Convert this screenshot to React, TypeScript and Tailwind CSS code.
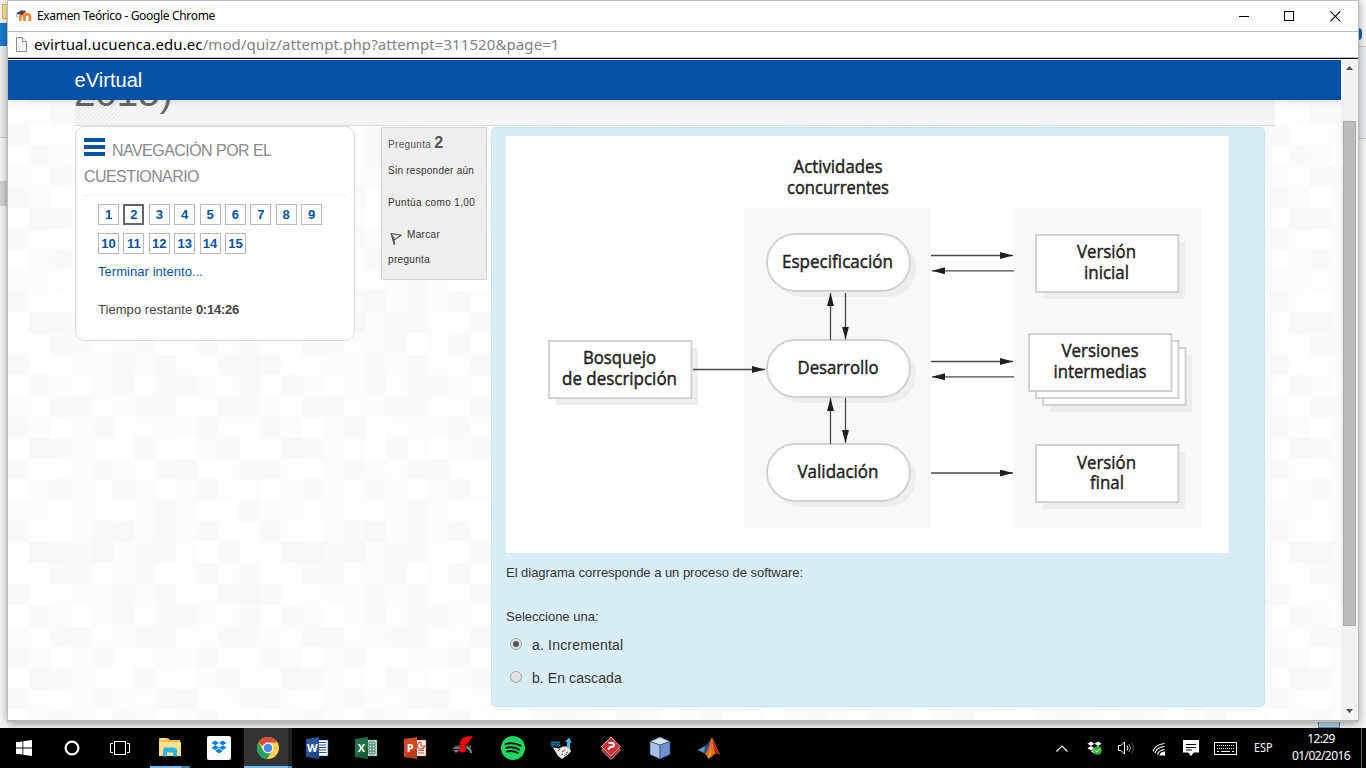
import React from "react";

const sans = "font-['Liberation_Sans',Arial,sans-serif]";
const ui = "font-['Noto_Sans','Open_Sans',sans-serif]";

const SHADES = ["#ffffff", "#fdfdfd", "#fcfcfc", "#fafafa", "#f8f8f8"];
const ROW_Y = [0, 21, 42, 63, 84, 105, 126, 147, 167, 188, 209, 230];
const MOSAIC = [
  "144342331031",
  "113312301313",
  "301223231134",
  "032023133213",
  "213312331133",
  "320230122311",
  "143210310231",
  "310232133013",
  "023213202311",
  "221211232003",
  "310234232310",
];

function Mosaic() {
  return (
    <svg className="absolute inset-0" width="1333" height="660" shapeRendering="crispEdges">
      <defs>
        <pattern id="mosaic" width="252" height="230" y="22" patternUnits="userSpaceOnUse">
          {MOSAIC.map((row, r) =>
            row.split("").map((v, c) => (
              <rect key={`${r}-${c}`} x={c * 21} y={ROW_Y[r]} width={21} height={ROW_Y[r + 1] - ROW_Y[r]} fill={SHADES[Number(v)]} />
            )),
          )}
        </pattern>
      </defs>
      <rect width="1333" height="660" fill="url(#mosaic)" />
    </svg>
  );
}

function MoodleIcon() {
  return (
    <svg width="16" height="12" viewBox="0 0 16 12">
      <path d="M4.2 11V6.8a2.2 2.2 0 0 1 4.3 0V11M8.5 11V6.8a2.7 2.7 0 0 1 5.4 0V11" fill="none" stroke="#f08a33" strokeWidth="2.8" />
      <path d="M0 3.2 5.5.3l5.2.6-4 3.6-3 .2z" fill="#4a4440" />
      <path d="M1 3.5v4" stroke="#8a8a8a" strokeWidth=".9" />
    </svg>
  );
}

function TitleBar() {
  return (
    <div className="flex h-[31px] items-center bg-white pb-[2px] pl-[8px]">
      <MoodleIcon />
      <span className={`${ui} ml-[5px] text-[12px] tracking-[-0.33px] text-black`}>Examen Teórico - Google Chrome</span>
      <svg className="ml-auto mr-[16px]" width="103" height="12" viewBox="0 0 103 12">
        <path d="M0 6.5h10" stroke="#000" />
        <rect x="45.5" y="1.5" width="9" height="9" fill="none" stroke="#000" />
        <path d="M91.3 1.3l10 10M101.3 1.3l-10 10" stroke="#000" strokeWidth="1.1" />
      </svg>
    </div>
  );
}

function AddressBar() {
  return (
    <div className="flex h-[26px] items-center border-t border-[#bdbdbd] bg-white pl-[8px]">
      <svg width="11" height="15" viewBox="0 0 11 15">
        <path d="M.5.5h6l4 4v10H.5z" fill="#f6f6f6" stroke="#8c8c8c" />
        <path d="M6.5.5v4h4" fill="#fff" stroke="#8c8c8c" />
      </svg>
      <span className={`${ui} ml-[7px] text-[15px] tracking-[0.09px] text-[#828282]`}>
        <span className="text-black">evirtual.ucuenca.edu.ec</span>/mod/quiz/attempt.php?attempt=311520&amp;page=1
      </span>
    </div>
  );
}

function Scrollbar() {
  return (
    <div className="flex h-full w-[17px] flex-col items-center bg-[#f1f1f1]">
      <svg className="mt-[6px]" width="7" height="4" viewBox="0 0 7 4"><path d="M0 4 3.5 0 7 4z" fill="#505050" /></svg>
      <div className="mt-[51px] h-[505px] w-[13px] border border-[#a8a8a8] bg-[#bcbcbc]" />
      <svg className="mb-[7px] mt-auto" width="7" height="4" viewBox="0 0 7 4"><path d="M0 0h7L3.5 4z" fill="#505050" /></svg>
    </div>
  );
}

function QuizNav() {
  return (
    <aside className={`${sans} h-[215px] w-[280px] rounded-[10px] border border-[#ddd] bg-white px-[8px]`}>
      <h2 className="flex h-[69px] flex-wrap content-start border-b border-[#eee] pt-[11px] text-[16px] leading-[26px] text-[#8a8a8a]">
        <svg className="mr-[7px]" width="21" height="19" viewBox="0 0 21 19">
          <path d="M0 2h21M0 9h21M0 16h21" stroke="#0452a5" strokeWidth="3.8" />
        </svg>
        <span className="tracking-[-0.54px]">NAVEGACIÓN POR EL</span>
        <span className="w-full tracking-[-0.57px]">CUESTIONARIO</span>
      </h2>
      <div className="ml-[14px] mt-[8px] flex w-[240px] flex-wrap gap-x-[4.4px] gap-y-[8px]">
        {Array.from({ length: 15 }, (_, i) => i + 1).map((n) => (
          <span
            key={n}
            className={
              n === 2
                ? "flex h-[21px] w-[21px] items-center justify-center border-2 border-[#666] pb-px text-[13px] font-bold leading-none text-[#0452a5]"
                : "flex h-[21px] w-[21px] items-center justify-center border border-[#bababa] pb-px text-[13px] font-bold leading-none text-[#0452a5]"
            }
          >
            {n}
          </span>
        ))}
      </div>
      <p className="ml-[14px] mt-[8px] text-[13px] leading-[20px] tracking-[0.05px] text-[#0452a5]">Terminar intento...</p>
      <p className="ml-[14px] mt-[18px] text-[13px] leading-[20px] tracking-[0.05px] text-[#444]">
        Tiempo restante <b className="tracking-[-0.25px]">0:14:26</b>
      </p>
    </aside>
  );
}

function QuestionInfo() {
  return (
    <div className={`${sans} h-[153px] w-[106px] rounded-[2px] border border-[#d6d6d6] bg-[#eee] pl-[6px] text-[10px] tracking-[0.32px] text-[#333]`}>
      <p className="mt-[5px] leading-[20px] text-[#555]">Pregunta <b className="text-[16px] tracking-normal">2</b></p>
      <p className="mt-[6px] leading-[20px] tracking-[0.26px]">Sin responder aún</p>
      <p className="mt-[12px] leading-[20px] tracking-[0.38px]">Puntúa como 1,00</p>
      <p className="mt-[9px] flex flex-wrap leading-[25px]">
        <svg className="ml-[2px] mr-[5px] mt-[10px]" width="12" height="13" viewBox="0 0 12 13">
          <path d="M1 1l3.5 11.5M1.5 1.5 11 3.2 4.2 8" fill="none" stroke="#555" strokeWidth="1.2" />
          <path d="M.5.8l3.8 4.8.9 6.9-1.4.1z" fill="#555" />
        </svg>
        <span>Marcar</span>
        <span className="w-full">pregunta</span>
      </p>
    </div>
  );
}

type LabelProps = { x: number; y: number; w: number; children: string };
function Label({ x, y, w, children }: LabelProps) {
  return (
    <text x={x - w / 2} y={y} textLength={w} lengthAdjust="spacingAndGlyphs" fontFamily="'Open Sans','Noto Sans',sans-serif" fontSize="17.5" fill="#231f20" stroke="#231f20" strokeWidth="0.45">
      {children}
    </text>
  );
}

function Pill({ y }: { y: number }) {
  return (
    <>
      <rect x="267" y={y + 6} width="143" height="57" rx="28.5" fill="#eee" />
      <rect x="261" y={y} width="143" height="57" rx="28.5" fill="#fff" stroke="#d2d2d2" strokeWidth="2" />
    </>
  );
}

function Sheet({ x, y, shadow = true }: { x: number; y: number; shadow?: boolean }) {
  return (
    <>
      {shadow && <rect x={x + 7} y={y + 7} width="142" height="57" fill="#eee" />}
      <rect x={x} y={y} width="142.5" height="57" fill="#fff" stroke="#d2d2d2" strokeWidth="2" />
    </>
  );
}

function Arrow({ x1, y1, x2, y2 }: { x1: number; y1: number; x2: number; y2: number }) {
  return <line x1={x1} y1={y1} x2={x2} y2={y2} stroke="#4a4748" strokeWidth="1.3" markerEnd="url(#head)" />;
}

function Diagram() {
  return (
    <svg className="block" width="723" height="417" viewBox="0 0 723 417">
      <defs>
        <marker id="head" markerUnits="userSpaceOnUse" markerWidth="14" markerHeight="8" refX="13" refY="3.5" orient="auto">
          <path d="M0 0 13 3.5 0 7z" fill="#231f20" />
        </marker>
      </defs>
      <rect width="723" height="417" fill="#fff" />
      <rect x="238" y="72" width="187" height="320" fill="#f8f8f8" />
      <rect x="508" y="72" width="187" height="320" fill="#f8f8f8" />
      <Label x={332} y={37} w={89}>Actividades</Label>
      <Label x={332} y={58} w={102}>concurrentes</Label>
      <Pill y={98} />
      <Pill y={204} />
      <Pill y={308} />
      <Label x={331.5} y={132} w={111}>Especificación</Label>
      <Label x={332} y={238} w={81}>Desarrollo</Label>
      <Label x={332} y={342} w={81}>Validación</Label>
      <Sheet x={43} y={205} />
      <Label x={113.5} y={228} w={73}>Bosquejo</Label>
      <Label x={113.5} y={249} w={115}>de descripción</Label>
      <Sheet x={530} y={99} />
      <Label x={600.5} y={121.500} w={59}>Versión</Label>
      <Label x={600.5} y={142.500} w={45}>inicial</Label>
      <Sheet x={537} y={212} />
      <Sheet x={530} y={205} shadow={false} />
      <Sheet x={523} y={198} shadow={false} />
      <Label x={594} y={221} w={77}>Versiones</Label>
      <Label x={594} y={241.500} w={93}>intermedias</Label>
      <Sheet x={530} y={309} />
      <Label x={600.5} y={332.500} w={59}>Versión</Label>
      <Label x={601} y={353} w={34}>final</Label>
      <Arrow x1={187} y1={233.5} x2={259} y2={233.5} />
      <Arrow x1={324.5} y1={204} x2={324.5} y2={157} />
      <Arrow x1={339.5} y1={157} x2={339.5} y2={203.500} />
      <Arrow x1={324.5} y1={308} x2={324.5} y2={262} />
      <Arrow x1={339.5} y1={262} x2={339.5} y2={307} />
      <Arrow x1={425} y1={119.5} x2={507} y2={119.5} />
      <Arrow x1={508} y1={134.8} x2={426} y2={134.8} />
      <Arrow x1={425} y1={225.5} x2={507} y2={225.5} />
      <Arrow x1={508} y1={240.8} x2={426} y2={240.8} />
      <Arrow x1={425} y1={337} x2={507} y2={337} />
    </svg>
  );
}

function Radio({ checked = false }: { checked?: boolean }) {
  return (
    <span className="flex h-[12px] w-[12px] items-center justify-center rounded-full border border-[#a5a5a5] bg-linear-to-b from-[#e8e8e8] to-[#dedede]">
      {checked && <span className="h-[6px] w-[6px] rounded-full bg-[#555]" />}
    </span>
  );
}

function Question() {
  return (
    <main className={`${sans} h-[580px] w-[774px] rounded-[5px] border border-[#bce8f1] bg-[#d9edf7] pl-[14px] pt-[8px] text-[#333]`}>
      <Diagram />
      <p className="mt-[10px] text-[13px] leading-[20px] tracking-[-0.03px]">El diagrama corresponde a un proceso de software:</p>
      <p className="mt-[24px] text-[13px] leading-[20px] tracking-[0px]">Seleccione una:</p>
      <div className="mt-[7px] flex h-[20px] items-center gap-[10px] pl-[4px] text-[14px] tracking-[0.18px]">
        <Radio checked />
        <span className="pt-[2px]">a. Incremental</span>
      </div>
      <div className="mt-[13px] flex h-[20px] items-center gap-[10px] pl-[4px] text-[14px] tracking-[0.08px]">
        <Radio />
        <span className="pt-[2px]">b. En cascada</span>
      </div>
    </main>
  );
}

function Page() {
  return (
    <div className="flex h-[660px]">
      <div className="relative w-[1333px] overflow-hidden">
        <Mosaic />
        <div className="relative flex h-full flex-col">
          <nav className={`${sans} z-10 h-[40px] shrink-0 bg-[#0452a5] pl-[66.500px] text-[20px] leading-[40px] tracking-[0.05px] text-white shadow-[0_1px_8px_rgba(0,0,0,0.13)]`}>eVirtual</nav>
          <header className="ml-[67px] flex h-[26px] w-[1200px] shrink-0 items-end overflow-hidden border-b border-[#ddd] bg-[repeating-linear-gradient(135deg,#f8f8f8_0_2.1px,#ebebeb_2.1px_2.83px)]">
            <h1 className={`${sans} ml-[-1px] h-[54px] text-[38.5px] leading-[44px] text-[#666]`}>2015)</h1>
          </header>
          <div className="ml-[67px] flex items-start">
            <QuizNav />
            <div className="ml-[26px] mt-px"><QuestionInfo /></div>
            <div className="ml-[4px] mt-px"><Question /></div>
          </div>
        </div>
      </div>
      <Scrollbar />
    </div>
  );
}

function BrowserWindow() {
  return (
    <div className="z-10 h-[721px] w-[1350px] shrink-0 border-b border-[#b5b5b5] shadow-[0_2px_9px_rgba(0,0,0,0.45)] outline-1 -outline-offset-0 outline-[#bdbdbd]">
      <div className="h-px bg-[#bdbdbd]" />
      <div className="mt-[-1px] border-t border-[#bdbdbd]">
        <TitleBar />
      </div>
      <div className="mt-[-1px]"><AddressBar /></div>
      <div className="h-[3px] border-t border-[#bfc6ca] bg-white"><div className="h-px bg-black" /></div>
      <Page />
    </div>
  );
}

function Office({ letter, color, dark, children }: { letter: string; color: string; dark: string; children: React.ReactNode }) {
  return (
    <svg width="24" height="24" viewBox="0 0 24 24">
      <rect x="12" y="4" width="11" height="16" fill="#fff" stroke={color} strokeWidth=".6" />
      {children}
      <path d="M1 3 14 1v22L1 21z" fill={color} />
      <path d="M1 21 14 23V12z" fill={dark} opacity=".35" />
      <text x="7.3" y="16" textAnchor="middle" fontFamily="'Open Sans',sans-serif" fontWeight="700" fontSize="11" fill="#fff">{letter}</text>
    </svg>
  );
}

function DropboxGlyph({ size, color }: { size: number; color: string }) {
  return (
    <svg width={size} height={size} viewBox="0 0 24 24" fill={color}>
      <path d="M7 2 12 5.2 7 8.4 2 5.2zM17 2l5 3.2-5 3.2-5-3.2zM2 11.6l5-3.2 5 3.2-5 3.2zM17 8.4l5 3.2-5 3.2-5-3.2zM7 16l5-3.2L17 16l-5 3.4z" />
    </svg>
  );
}

function ChromeIcon() {
  return (
    <svg width="24" height="24" viewBox="0 0 24 24">
      <circle cx="12" cy="12" r="11" fill="#fdd04e" />
      <path d="M2.5 6.5A11 11 0 0 1 21.5 6.5H12a5.5 5.5 0 0 0-5.2 3.8z" fill="#dd4b3e" />
      <path d="M2.5 6.5A11 11 0 0 0 11 23l5-8.2a5.5 5.5 0 0 1-8.8 0z" fill="#1da362" />
      <circle cx="12" cy="12" r="5.4" fill="#fff" />
      <circle cx="12" cy="12" r="4.3" fill="#4c8bf5" />
    </svg>
  );
}

function Cell({ children }: { children: React.ReactNode }) {
  return <div className="flex h-full w-[49px] items-center pl-[13px]">{children}</div>;
}

function Taskbar() {
  return (
    <footer className="flex h-[40px] items-center bg-black">
      <div className="flex w-[48px] justify-center">
        <svg width="16" height="16" viewBox="0 0 16 16" fill="#fff"><path d="M0 2.3 6.5 1.4v6.2H0zM7.3 1.2 16 0v7.6H7.3zM0 8.4h6.5v6.2L0 13.7zM7.3 8.4H16V16l-8.7-1.2z" /></svg>
      </div>
      <div className="flex w-[48px] justify-center">
        <svg width="16" height="16" viewBox="0 0 16 16"><circle cx="8" cy="8" r="6.4" fill="none" stroke="#fff" strokeWidth="2.200" /></svg>
      </div>
      <div className="flex w-[48px] justify-center">
        <svg width="20" height="14" viewBox="0 0 20 14" fill="none" stroke="#fff"><rect x="4.5" y=".5" width="11" height="13" /><path d="M3 2.5H.5v9H3M17 2.5h2.5v9H17" /></svg>
      </div>
      <div className="ml-px flex h-full w-[49px] flex-col pl-[5px]">
        <div className="flex flex-1 items-center pl-[8px]">
          <svg width="24" height="24" viewBox="0 0 24 24">
            <path d="M1 3h9l2 2h10v16H1z" fill="#f0bd49" />
            <path d="M1 7h22v14H1z" fill="#fde08a" />
            <path d="M2.5 4.2h5" stroke="#fff6d0" strokeWidth="1.5" />
            <path d="M5 21.500v-7l2-2h10l2 2v7h-4v-4H9v4z" fill="#28b5e8" />
          </svg>
        </div>
        <div className="flex h-[2px] w-[40px]"><i className="w-[31px] bg-[#76b9ed]" /><i className="w-[9px] bg-[#4f7fa6]" /></div>
      </div>
      <Cell><div className="flex h-[24px] w-[24px] items-center justify-center rounded-[2px] bg-white"><DropboxGlyph size={18} color="#007ee5" /></div></Cell>
      <div className="ml-px flex h-full w-[48px] flex-col bg-[#333]">
        <div className="flex flex-1 border-r-[4px] border-[#202020]"><div className="pl-[12px] pt-[8px]"><ChromeIcon /></div></div>
        <div className="flex h-[2px]"><i className="w-[44px] bg-[#76b9ed]" /><i className="w-[4px] bg-[#4f8fc6]" /></div>
      </div>
      <Cell><Office letter="W" color="#2b579a" dark="#102f60"><path d="M14 6.500h7.500M14 9h7.500M14 11.500h7.500M14 14h7.500M14 16.500h7.500" stroke="#2b579a" /></Office></Cell>
      <Cell><Office letter="X" color="#1e7145" dark="#0a3a20"><path d="M15 6h6v12h-6zM18 6v12M15 9h6M15 12h6M15 15h6" fill="none" stroke="#1e7145" /></Office></Cell>
      <Cell><Office letter="P" color="#d24726" dark="#8a2508"><path d="M15 14.500h6M15 17h6M18 6v4h3.500A3.500 3.500 0 1 1 18 6" fill="none" stroke="#d24726" strokeWidth="1.200" /></Office></Cell>
      <Cell>
        <svg width="24" height="24" viewBox="0 0 24 24">
          <path d="M1 12q3-3 7-1v2H1zm0 2h7l-4 3zM14 9l5 1v2l-5-1z" fill="#777" />
          <path d="M7.500 8.500Q9 1 15 0.500L21 0 17 6 12 10z" fill="#f00" />
          <path d="M4 9.500l4-1 6 1 5 1-3 2-8-1z" fill="#444" />
          <circle cx="10.500" cy="13" r="3.400" fill="#f00" />
          <path d="M14.500 12q4 0 4.500 5" fill="none" stroke="#888" strokeWidth="2.200" />
        </svg>
      </Cell>
      <Cell>
        <svg width="24" height="24" viewBox="0 0 24 24">
          <circle cx="12" cy="12" r="12" fill="#1ed760" />
          <path d="M4.500 8.200c5-1.500 10.600-1 15 1.500M5.300 12c4.200-1.200 9-.7 12.800 1.500M6 15.600c3.600-1 7.500-.6 10.700 1.200" fill="none" stroke="#191414" strokeWidth="2" strokeLinecap="round" />
        </svg>
      </Cell>
      <Cell>
        <svg width="24" height="24" viewBox="0 0 24 24">
          <path d="M3 11.500l6 1 4-2 6 0 2 5-4 4-5 3.500-4-3z" fill="#e8e8df" />
          <path d="M8 15l2-2M12 16l3-2M11 19l2-1M16 17l2-1M14 20l3-2" stroke="#555" />
          <path d="M1 5.500h9v5H1z" fill="#087cad" />
          <text x="1.500" y="9.900" fontFamily="'Liberation Sans',sans-serif" fontWeight="700" fontSize="4.300" fill="#001f35">CAT</text>
          <path d="M17 12V6h-2l4-4.500 3 5.500-2-.5v6z" fill="#4db7ed" />
        </svg>
      </Cell>
      <Cell>
        <svg width="24" height="24" viewBox="0 0 24 24">
          <path d="M12 5l9.500 9L12 23.500 2.500 14z" fill="#b5262c" stroke="#ddd" strokeWidth=".7" />
          <path d="M12 1l9.500 9.500L12 20 2.500 10.500z" fill="#cf3035" stroke="#ddd" strokeWidth=".7" />
          <path d="M9.500 7h3.500a1.900 1.900 0 0 1 0 3.800l-1.500.2-2.500 2.500" fill="none" stroke="#fff" strokeWidth="1.900" />
        </svg>
      </Cell>
      <Cell>
        <svg width="24" height="24" viewBox="0 0 24 24" stroke="#344a88" strokeWidth=".7">
          <path d="M2 5.500 12 1l10 4.500L12 9z" fill="#d5e6df" />
          <path d="M2 5.500 12 9v14L2 18.500z" fill="#a6bfe4" />
          <path d="M22 5.500 12 9v14l10-4.500z" fill="#6d91cf" />
        </svg>
      </Cell>
      <Cell>
        <svg width="24" height="24" viewBox="0 0 24 24">
          <path d="M.5 14 8 10l4 4-5 3z" fill="#4b9dc8" />
          <path d="M8 10c3-1 4-6 7-8l-3 13-5 2z" fill="#294e83" />
          <path d="M15 1.500c3 3 4.500 12 8.500 17-4-2-6-1-8.500 2-1.500 1.500-3.500 2.500-4 2.500-.5-3-2-4-3.500-5.500C13 14 12 5 15 1.500z" fill="#e56b25" />
          <path d="M15 1.500c2.500 4 4 13 8.500 17-2.500-1-4-1-5 0C17 13 16 5 15 1.500z" fill="#9b291f" />
          <path d="M14 9c0 6-2 9-3 13l3-3z" fill="#fbb33e" />
        </svg>
      </Cell>
      <div className="ml-auto flex items-center text-white">
        <div className="flex w-[32px] justify-center"><svg width="12" height="7" viewBox="0 0 12 7"><path d="M.5 6.500 6 1l5.500 5.500" fill="none" stroke="#fff" strokeWidth="1.200" /></svg></div>
        <div className="relative flex w-[32px] justify-center">
          <DropboxGlyph size={17} color="#fff" />
          <svg className="absolute left-[15px] top-[6px]" width="9" height="9" viewBox="0 0 9 9"><circle cx="4.500" cy="4.500" r="4.300" fill="#2db52d" /><path d="M2.300 4.600 4 6.200l2.800-3.400" fill="none" stroke="#fff" /></svg>
        </div>
        <div className="flex w-[32px] justify-center">
          <svg width="17" height="14" viewBox="0 0 17 14" fill="none" stroke="#fff"><path d="M.5 4.500h2.500L6.500 1v12L3 9.500H.5z" /><path d="M9 4.500q1.800 2.500 0 5" /><path d="M11 3q3 4 0 8" stroke="#999" /><path d="M13.300 1.500q4 5.500 0 11" stroke="#555" /></svg>
        </div>
        <div className="flex w-[33px] justify-center pt-[2px]">
          <svg width="14" height="14" viewBox="0 0 14 14" fill="none" stroke="#fff" strokeWidth="1.200"><path d="M1 9.500Q3 2.500 12.500 1.500M3 11Q4.500 5.500 12.500 4.500M5.500 12.500Q6.500 8.500 12.500 7.500" /><path d="M8.300 13q.5-2.300 4.200-2.800V13z" fill="#fff" /></svg>
        </div>
        <div className="flex w-[31px] justify-center">
          <svg width="16" height="16" viewBox="0 0 16 16"><path d="M0 0h16v12.500h-5L8 16l-3-3.500H0z" fill="#fff" /><path d="M3 4.500h10M3 7.500h10M3 10h6" stroke="#000" /></svg>
        </div>
        <div className="flex w-[38px] justify-center">
          <svg width="23" height="13" viewBox="0 0 23 13" fill="none" stroke="#fff"><rect x=".5" y=".5" width="22" height="12" /><path d="M3 3.500h18M3 6.500h18" strokeDasharray="1 1" /><path d="M3 9.500h2M7 9.500h9M18 9.500h2" /></svg>
        </div>
        <span className={`${ui} flex w-[39px] justify-center`}><span className="inline-block origin-center scale-x-[0.9] text-[12px]">ESP</span></span>
        <span className={`${ui} flex w-[76px] flex-col items-center pb-[2px] text-[12px] leading-[17px]`}>
          <span className="tracking-[-0.65px]">12:29</span>
          <span className="tracking-[-0.6px]">01/02/2016</span>
        </span>
        <i className="ml-[2px] mr-[4px] h-[40px] w-px bg-[#666]" />
      </div>
    </footer>
  );
}

export default function App() {
  return (
    <div className="h-[768px] w-[1366px] overflow-hidden bg-[#f4f4f4]">
      <div className="relative flex h-[728px] overflow-hidden">
        <div className="flex w-[8px] shrink-0 flex-col bg-[#f6f6f6]">
          <i className="ml-[2px] mt-[4px] h-[15px] border border-[#e0bd49] bg-[#fde79f]" />
          <i className="mt-[4px] h-[23px] bg-[#1979ca]" />
          <i className="h-[92px] border-b border-[#ccc] bg-[#eceeef]" />
          <i className="mt-[43px] h-[25px] bg-[#d4d4d4]" />
        </div>
        <BrowserWindow />
        <div className="flex flex-1 flex-col bg-[#f6f6f6]">
          <i className="mt-[28px] h-[12px] w-[4px] rounded-r-full bg-[#0a64ad]" />
          <i className="mt-[6px] h-[93px] border-y border-[#c8c8c8] bg-[#e9eeee]" />
        </div>
        <div className="absolute left-[1318px] top-[712px] h-[16px] w-[22px] border border-[#3b98cf] bg-[#bed6e2]" />
      </div>
      <Taskbar />
    </div>
  );
}
